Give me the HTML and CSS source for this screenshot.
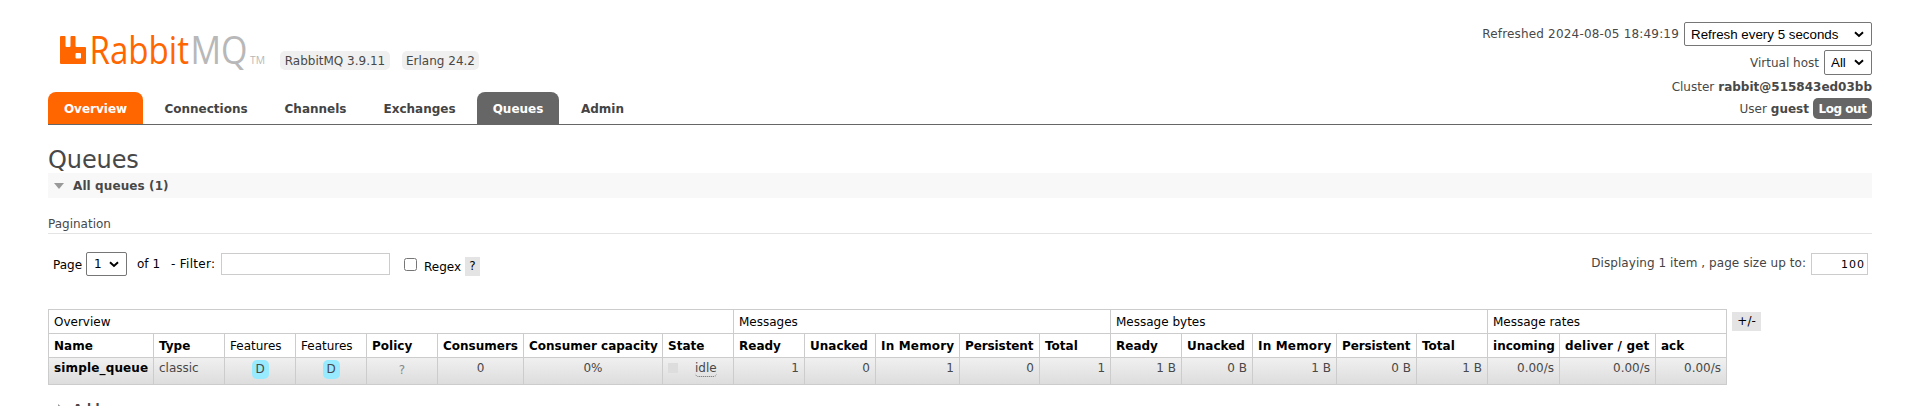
FILE: index.html
```
<!DOCTYPE html>
<html lang="en">
<head>
<meta charset="utf-8">
<title>RabbitMQ Management</title>
<link rel="stylesheet" href="styles.css">
</head>
<body>
<header class="header">
  <div class="brand">
    <svg class="logo" width="206" height="32" viewBox="0 0 206 32" role="img" aria-label="RabbitMQ">
      <path class="mark" d="M1 0H4.500Q5.500 0 5.500 1V10Q5.500 11 6.500 11H9.500Q10.500 11 10.500 10V1Q10.500 0 11.500 0H14.500Q15.500 0 15.500 1V10Q15.500 11 16.500 11H25Q26 11 26 12V27Q26 28 25 28H1Q0 28 0 27V1Q0 0 1 0ZM16.500 17Q15.500 17 15.500 18V21.500Q15.500 22.500 16.500 22.500H20Q21 22.500 21 21.500V18Q21 17 20 17Z"/>
      <text class="word rabbit" x="29.500" y="28" textLength="99.500" lengthAdjust="spacingAndGlyphs">Rabbit</text>
      <text class="word mq" x="130.500" y="28" textLength="57" lengthAdjust="spacingAndGlyphs">MQ</text>
      <text class="tm" x="190" y="28" textLength="15" lengthAdjust="spacingAndGlyphs">TM</text>
    </svg>
    <span class="version v-rabbit">RabbitMQ 3.9.11</span>
    <span class="version v-erlang">Erlang 24.2</span>
  </div>
  <div class="status">
    <div class="status-row refresh"><span class="t-refreshed">Refreshed 2024-08-05 18:49:19</span><select class="sel-refresh"><option>Refresh every 5 seconds</option></select></div>
    <div class="status-row vhost"><span>Virtual host</span><select class="sel-vhost"><option>All</option></select></div>
    <div class="status-row cluster"><span>Cluster</span><b>rabbit@515843ed03bb</b></div>
    <div class="status-row user"><span>User</span><b>guest</b><button class="logout">Log out</button></div>
  </div>
</header>
<nav class="tabs">
  <a class="tab overview">Overview</a><a class="tab connections">Connections</a><a class="tab channels">Channels</a><a class="tab exchanges">Exchanges</a><a class="tab queues">Queues</a><a class="tab admin">Admin</a>
</nav>
<main>
  <h1>Queues</h1>
  <h2 class="section"><i class="arrow"></i><span>All queues (1)</span></h2>
  <h3>Pagination</h3>
  <div class="pager">
    <span class="page-label">Page</span><select class="sel-page"><option>1</option></select>
    <span class="of">of 1</span><span class="filter-label">- Filter:</span><input class="filter" type="text">
    <input class="regex" type="checkbox"><span class="regex-label">Regex</span><span class="help">?</span>
    <span class="displaying">Displaying 1 item , page size up to:</span><input class="page-size" type="text" value="100">
  </div>
  <div class="table-wrap">
    <table class="list">
      <colgroup><col class="w105"><col class="w71"><col class="w71"><col class="w71"><col class="w71"><col class="w86"><col class="w139"><col class="w71"><col class="w71"><col class="w71"><col class="w84"><col class="w80"><col class="w71"><col class="w71"><col class="w71"><col class="w84"><col class="w80"><col class="w71"><col class="w72"><col class="w96"><col class="w71"></colgroup>
      <thead>
        <tr class="groups"><th colspan="8">Overview</th><th colspan="5">Messages</th><th colspan="5">Message bytes</th><th colspan="3">Message rates</th></tr>
        <tr class="cols"><th>Name</th><th>Type</th><th class="plain">Features</th><th class="plain">Features</th><th>Policy</th><th>Consumers</th><th>Consumer capacity</th><th>State</th><th>Ready</th><th>Unacked</th><th class="wide">In Memory</th><th class="tight">Persistent</th><th>Total</th><th>Ready</th><th>Unacked</th><th class="wide">In Memory</th><th class="tight">Persistent</th><th>Total</th><th>incoming</th><th class="wide">deliver / get</th><th>ack</th></tr>
      </thead>
      <tbody>
        <tr><td class="name">simple_queue</td><td>classic</td><td class="c"><span class="feature">D</span></td><td class="c"><span class="feature">D</span></td><td class="c policy">?</td><td class="c">0</td><td class="c">0%</td><td><span class="state"><i></i><span class="idle">idle</span></span></td><td class="r">1</td><td class="r">0</td><td class="r">1</td><td class="r">0</td><td class="r">1</td><td class="r">1 B</td><td class="r">0 B</td><td class="r">1 B</td><td class="r">0 B</td><td class="r">1 B</td><td class="r">0.00/s</td><td class="r">0.00/s</td><td class="r">0.00/s</td></tr>
      </tbody>
    </table>
    <span class="plusminus">+/-</span>
  </div>
  <h2 class="section add"><i class="arrow closed"></i><span>Add a new queue</span></h2>
</main>
</body>
</html>
```
FILE: styles.css
```
* { box-sizing: border-box; }
html, body { height: 406px; overflow: hidden; }
body { margin: 0; padding: 0 45px 0 48px; background: #fff; color: #484848; font: 12px/16px Verdana, "DejaVu Sans", sans-serif; }
.header { display: flex; justify-content: space-between; height: 92px; }
.brand { display: flex; align-items: flex-start; padding: 36px 0 0 12px; }
.logo { display: block; overflow: visible; }
.mark, .rabbit { fill: #f60; }
.word { font: 38px "Open Sans", sans-serif; }
.mq { fill: #b8b8b8; }
.tm { fill: #b8b8b8; font: 10.5px "Open Sans", sans-serif; }
.version { height: 19px; margin-top: 15px; border-radius: 5px; background: #f0f0f0; line-height: 20px; text-align: center; white-space: nowrap; }
.v-rabbit { width: 110px; margin-left: 14px; }
.v-erlang { width: 77px; margin-left: 12px; }
.status { padding-top: 22px; }
.status-row { display: flex; align-items: center; justify-content: flex-end; gap: 5px; white-space: nowrap; }
.refresh { height: 24px; }
.t-refreshed { letter-spacing: .18px; }
.vhost { height: 25px; margin-top: 4px; }
.cluster { height: 23px; gap: 4px; }
.user { height: 21px; gap: 4px; }
select {
  appearance: none; margin: 0; padding: 0 6px; border: 1px solid #767676; border-radius: 2px;
  background: #fff url("data:image/svg+xml,%3Csvg xmlns='http://www.w3.org/2000/svg' width='10' height='7'%3E%3Cpath d='M1 1.300L5 5L9 1.300' fill='none' stroke='%23000' stroke-width='2'/%3E%3C/svg%3E") no-repeat right 7px center;
  color: #000; font: 13.333px "Liberation Sans", Arial, sans-serif;
}
.sel-refresh { width: 188px; height: 24px; }
.sel-vhost { width: 48px; height: 25px; }
.logout { width: 59px; height: 21px; padding: 1px 0 0; border: 0; border-radius: 5px; background: #666; color: #fff; font: bold 12px/20px "DejaVu Sans", sans-serif; letter-spacing: -.45px; }
.tabs { display: flex; gap: 6px; height: 33px; border-bottom: 1px solid #666; }
.tab { border-radius: 8px 8px 0 0; color: #444; font-weight: bold; line-height: 34px; height: 32px; text-align: center; }
.overview { width: 95px; background: #f60; color: #fff; }
.connections { width: 114px; }
.channels { width: 93px; }
.exchanges { width: 103px; }
.queues { width: 82px; background: #666; color: #fff; }
.admin { width: 75px; }
h1 { height: 30px; margin: 18px 0 0; font-size: 24px; font-weight: normal; line-height: 34px; letter-spacing: -.1px; }
.section { display: flex; align-items: center; height: 25px; margin: 0; padding-left: 6px; background: #f8f8f8; font-size: 12px; }
.section span { letter-spacing: .1px; }
.arrow { width: 0; height: 0; margin-right: 9px; border: solid transparent; border-width: 6px 5.5px 0; border-top-color: #999; }
.closed { margin: 0 9px 0 4px; border-width: 5.5px 0 5.5px 6px; border-color: transparent transparent transparent #999; }
h3 { height: 19px; margin: 17px 0 0; border-bottom: 1px solid #e4e4e4; font-size: 12px; font-weight: normal; line-height: 18px; }
.pager { display: flex; align-items: flex-start; height: 75px; padding: 18px 4px 0 5px; color: #000; white-space: nowrap; }
.page-label { margin-top: 5px; width: 33px; }
.sel-page { width: 41px; height: 24px; font: 12px "DejaVu Sans", sans-serif; padding: 0 7px; }
.of { width: 34px; margin: 4px 0 0 10px; }
.filter-label { width: 50px; margin-top: 4px; letter-spacing: .3px; }
input[type="text"] { height: 22px; border: 1px solid #ccc; padding: 2px 3px; margin: 1px 0 0; font: 12px "DejaVu Sans", sans-serif; }
.filter { width: 169px; }
.regex { width: 13px; height: 13px; margin: 6px 0 0 14px; }
.regex-label { width: 40px; margin: 7px 0 0 7px; }
.help { width: 15px; height: 19px; margin: 5px 0 0 1px; background: #e4e4e4; text-align: center; line-height: 19px; }
.displaying { margin: 3px 5px 0 auto; color: #444; letter-spacing: .06px; }
.pager .page-size { width: 57px; font-size: 11px; text-align: right; letter-spacing: 1px; padding-right: 2px; }
.table-wrap { display: flex; align-items: flex-start; }
.list { table-layout: fixed; width: 1679px; border-spacing: 0; border: solid #ccc; border-width: 1px 0 0 1px; }
.w105 { width: 105px; } .w71 { width: 71px; } .w72 { width: 72px; } .w80 { width: 80px; } .w84 { width: 84px; }
.w86 { width: 86px; } .w96 { width: 96px; } .w139 { width: 139px; }
th, td { padding: 0 5px; border: solid #ccc; border-width: 0 1px 1px 0; white-space: nowrap; text-align: left; }
th { height: 24px; color: #000; }
.wide { letter-spacing: .18px; }
.tight { letter-spacing: -.1px; }
.groups th, th.plain { font-weight: normal; }
td { height: 27px; padding-top: 2px; vertical-align: top; background: linear-gradient(#f0f0f0, #ddd); }
.name { color: #000; font-weight: bold; letter-spacing: .15px; }
.c { text-align: center; }
.r { text-align: right; }
.feature { display: block; width: 17px; height: 19px; margin: 0 auto; border-radius: 5px; background: #98ebff; line-height: 19px; }
td.policy { padding-top: 4px; color: #888; }
.state { display: flex; }
.state i { width: 10px; height: 10px; margin: 3px 17px 0 0; background: #ddd; }
.idle { border-bottom: 1px dotted #666; border-radius: 4px; }
.plusminus { width: 29px; height: 19px; margin: 3px 0 0 5px; background: #e4e4e4; color: #000; text-align: center; line-height: 19px; }
.add { margin-top: 11px; background: #fff; }
```
